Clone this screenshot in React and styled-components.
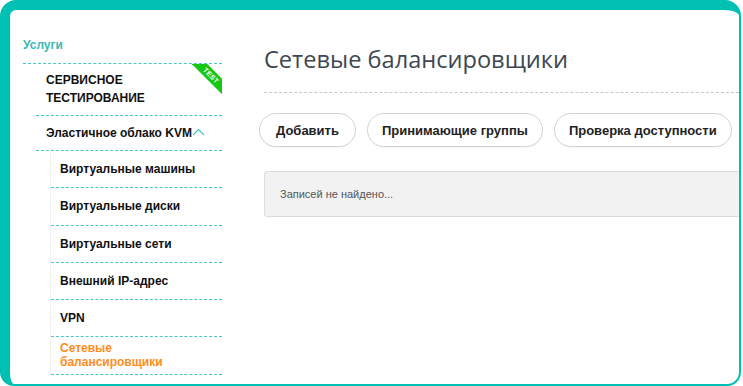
import styled, { createGlobalStyle } from "styled-components";

const GlobalStyle = createGlobalStyle`
  html, body {
    margin: 0;
    background: #ffffff;
  }
  * {
    box-sizing: border-box;
  }
`;

const TEAL = "#00bfb3";
const DASH = "#45c6c4";

const Frame = styled.div`
  width: 741px;
  height: 386px;
  border-style: solid;
  border-color: ${TEAL};
  border-width: 10px 2px 2px 10px;
  border-radius: 16px 16px 14px 14px;
  overflow: hidden;
  display: flex;
  background: #ffffff;
  font-family: "Liberation Sans", Arial, sans-serif;
`;

const Sidebar = styled.aside`
  width: 212px;
  flex-shrink: 0;
  padding: 28px 0 0 13px;
`;

const SectionTitle = styled.div`
  font-size: 12px;
  font-weight: bold;
  color: #3cb9b6;
  line-height: 14px;
  padding-bottom: 11px;
  border-bottom: 1px dashed ${DASH};
`;

const Menu = styled.ul`
  list-style: none;
  margin: 0;
  padding: 0;
`;

const MenuItem = styled.li`
  position: relative;
  margin-left: 13px;
  border-bottom: 1px dashed ${DASH};
`;

const MenuLink = styled.div`
  display: flex;
  align-items: center;
  padding: ${(p) => (p.$tall ? "7px 10px 8px" : "8px 10px 8px")};
  font-size: 12px;
  font-weight: bold;
  line-height: 18px;
  color: #111;
`;

const Chevron = styled.svg`
  width: 13px;
  height: 8px;
  margin-top: -3px;
`;

const SubMenu = styled.ul`
  list-style: none;
  margin: 0 0 0 27px;
  padding: 0;
  border-left: 1px solid #f0f0f0;
`;

const SubItem = styled.li`
  min-height: 37.25px;
  display: flex;
  align-items: center;
  padding: 4px 10px 4px 9px;
  border-bottom: 1px dashed ${DASH};
  font-size: 12px;
  font-weight: bold;
  line-height: 14px;
  color: ${(p) => (p.$active ? "#ff8c1a" : "#111")};
`;

const Ribbon = styled.div`
  position: absolute;
  top: 0;
  right: 0;
  width: 30px;
  height: 30px;
  overflow: hidden;
`;

const RibbonBand = styled.div`
  position: absolute;
  top: 6px;
  right: -11px;
  width: 44px;
  height: 11px;
  background: #15c815;
  transform: rotate(45deg);
  color: #fff;
  font-size: 7px;
  font-weight: bold;
  line-height: 11px;
  text-align: center;
  letter-spacing: 0.3px;
`;

const Main = styled.main`
  flex: 1;
  min-width: 0;
  padding: 33px 0 0 42px;
`;

const Title = styled.h1`
  margin: 0;
  font-family: "Open Sans", "Noto Sans", sans-serif;
  font-weight: normal;
  font-size: 23.6px;
  line-height: 32px;
  color: #3d4853;
  padding-bottom: 17px;
  border-bottom: 1px dashed #c8c8c8;
`;

const Toolbar = styled.div`
  display: flex;
  gap: 11px;
  margin: 20px 0 0 -5px;
`;

const PillButton = styled.button`
  height: 34px;
  padding: 0 ${(p) => (p.$wide ? "16px" : "14px")};
  border: 1px solid #d4d4d4;
  border-radius: 17px;
  background: #fff;
  font-family: "Liberation Sans", Arial, sans-serif;
  font-size: 13px;
  font-weight: bold;
  color: #222;
  white-space: nowrap;
  box-shadow: 0 1px 1px rgba(0, 0, 0, 0.04);
`;

const EmptyBox = styled.div`
  margin-top: 24px;
  width: calc(100% + 20px);
  height: 46px;
  display: flex;
  align-items: center;
  padding-left: 15px;
  background: #f2f2f2;
  border: 1px solid #dcdcdc;
  border-radius: 3px;
  font-size: 11px;
  color: #555;
`;

const subItems = [
  "Виртуальные машины",
  "Виртуальные диски",
  "Виртуальные сети",
  "Внешний IP-адрес",
  "VPN",
];

export default function App() {
  return (
    <>
      <GlobalStyle />
      <Frame>
        <Sidebar>
          <SectionTitle>Услуги</SectionTitle>
          <Menu>
            <MenuItem>
              <MenuLink $tall>
                СЕРВИСНОЕ
                <br />
                ТЕСТИРОВАНИЕ
              </MenuLink>
              <Ribbon>
                <RibbonBand>TEST</RibbonBand>
              </Ribbon>
            </MenuItem>
            <MenuItem>
              <MenuLink>
                Эластичное облако KVM
                <Chevron viewBox="0 0 13 8">
                  <polyline
                    points="1,7 6.5,1.5 12,7"
                    fill="none"
                    stroke={DASH}
                    strokeWidth="1.2"
                  />
                </Chevron>
              </MenuLink>
            </MenuItem>
          </Menu>
          <SubMenu>
            {subItems.map((s) => (
              <SubItem key={s}>{s}</SubItem>
            ))}
            <SubItem $active>
              Сетевые
              <br />
              балансировщики
            </SubItem>
          </SubMenu>
        </Sidebar>
        <Main>
          <Title>Сетевые балансировщики</Title>
          <Toolbar>
            <PillButton $wide>Добавить</PillButton>
            <PillButton>Принимающие группы</PillButton>
            <PillButton>Проверка доступности</PillButton>
          </Toolbar>
          <EmptyBox>Записей не найдено...</EmptyBox>
        </Main>
      </Frame>
    </>
  );
}
